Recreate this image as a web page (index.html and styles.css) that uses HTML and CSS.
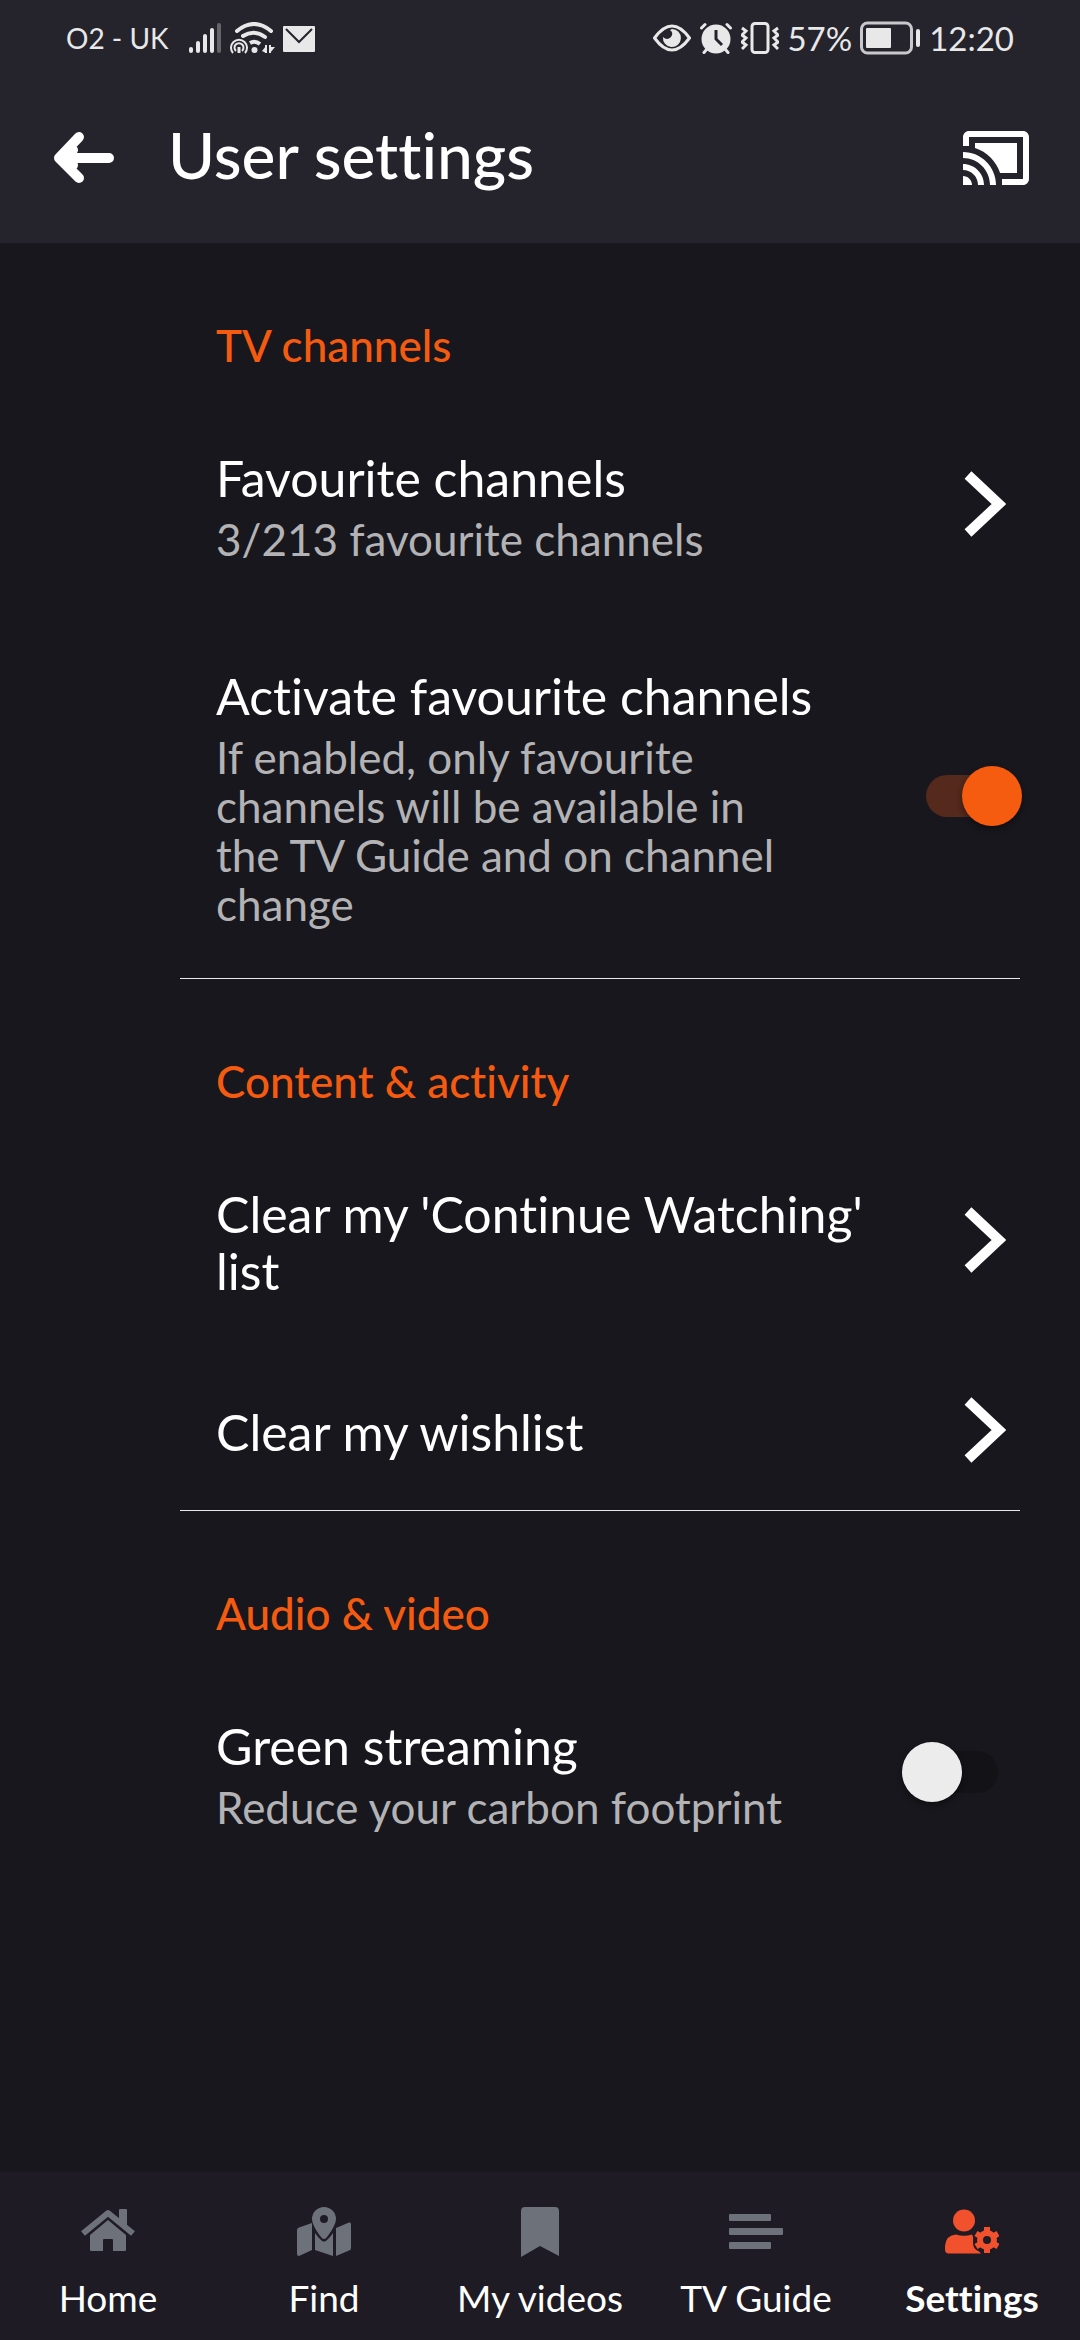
FILE: index.html
```html
<!DOCTYPE html>
<html lang="en">
<head>
<meta charset="UTF-8">
<meta name="viewport" content="width=device-width, initial-scale=1.0">
<title>User settings</title>
<link rel="stylesheet" href="styles.css">
</head>
<body>

<header class="header">
  <div class="status">
    <span class="carrier">O2 - UK</span>
    <div class="status-icons">
      <svg width="34" height="32" viewBox="0 0 34 32" fill="#e8e8e8">
        <rect x="0" y="25" width="4" height="6" rx="2"/>
        <rect x="7" y="19" width="4" height="12" rx="2"/>
        <rect x="14" y="12" width="4" height="19" rx="2"/>
        <rect x="21" y="6" width="4" height="25" rx="2"/>
        <rect x="28" y="1" width="4" height="30" rx="2" fill="#66656b"/>
      </svg>
      <svg width="46" height="32" viewBox="0 0 46 32" fill="none" stroke="#e8e8e8">
        <path d="M7 9Q24 -5 41 9" stroke-width="4" stroke-linecap="round"/>
        <path d="M13 14Q24 7 35 15" stroke-width="4" stroke-linecap="round"/>
        <path d="M20 21Q25 18 30 22" stroke-width="4"/>
        <circle cx="24.5" cy="28" r="3" fill="#e8e8e8" stroke="none"/>
        <path d="M3 31A8 8 0 1 1 15 31" stroke-width="2"/>
        <path d="M6 29A4.5 4.5 0 1 1 12 29" stroke-width="2"/>
        <path d="M9 25V31" stroke-width="3"/>
        <path d="M36 23V31M40 23V31" stroke-width="2"/>
        <path d="M32 29L36 24V31ZM45 25L40 31V25Z" fill="#e8e8e8" stroke="none"/>
      </svg>
      <svg width="32" height="32" viewBox="0 0 32 32">
        <rect y="4" width="32" height="26" rx="1" fill="#e8e8e8"/>
        <path d="M3 7L16 20L29 7" fill="none" stroke="#25242d" stroke-width="2"/>
      </svg>
    </div>
    <div class="status-icons status-right">
      <svg width="38" height="32" viewBox="0 0 38 32">
        <path d="M1.5 16Q19 -8 36.5 16Q19 40 1.5 16Z" fill="none" stroke="#e8e8e8" stroke-width="3"/>
        <path d="M19 7A9 9 0 1 1 10 15Q14 19 18 15Q21 11 17 8Z" fill="#e8e8e8"/>
      </svg>
      <svg width="34" height="32" viewBox="0 0 34 32">
        <g stroke="#e8e8e8" stroke-width="3" stroke-linecap="round">
          <path d="M2.5 6L6 2.5M31.5 6L28 2.5M8 27L5 30.5M26 27L29 30.5"/>
        </g>
        <circle cx="17" cy="17" r="14.5" fill="#e8e8e8"/>
        <path d="M17 8V17L23 23" fill="none" stroke="#25242d" stroke-width="3"/>
      </svg>
      <svg width="38" height="32" viewBox="0 0 38 32" fill="none" stroke="#e8e8e8" stroke-width="3">
        <rect x="11" y="1.5" width="16" height="29" rx="3"/>
        <path d="M1 6L5 9L1 13L5 16L1 20L5 23L1 27M37 6L33 9L37 13L33 16L37 20L33 23L37 27"/>
      </svg>
      <span class="status-text">57%</span>
      <svg width="61" height="34" viewBox="0 0 61 34">
        <rect x="1.5" y="2" width="50" height="30" rx="6" fill="none" stroke="#c9c9cc" stroke-width="3"/>
        <rect x="6" y="7" width="25" height="20" rx="1" fill="#e8e8e8"/>
        <rect x="56" y="8" width="4" height="18" rx="2" fill="#e8e8e8"/>
      </svg>
      <span class="status-text">12:20</span>
    </div>
  </div>
  <div class="title-bar">
    <button class="icon-button" aria-label="Back">
      <svg width="60" height="52" viewBox="0 0 60 52" fill="none" stroke="#fff" stroke-width="10" stroke-linecap="round" stroke-linejoin="round">
        <path d="M25 5L5 26L25 46M6 26H55M19 18L13 26L19 33"/>
      </svg>
    </button>
    <h1 class="title">User settings</h1>
    <button class="icon-button" aria-label="Cast">
      <svg width="66" height="54" viewBox="1 3 22 18" fill="#fff">
        <path d="M1 18v3h3c0-1.66-1.34-3-3-3zm0-4v2c2.76 0 5 2.24 5 5h2c0-3.87-3.13-7-7-7zm18-7H5v1.63c3.96 1.28 7.09 4.41 8.37 8.37H19V7zM1 10v2c4.97 0 9 4.03 9 9h2c0-6.08-4.93-11-11-11zm20-7H3c-1.1 0-2 .9-2 2v3h2V5h18v14h-7v2h7c1.1 0 2-.9 2-2V5c0-1.1-.9-2-2-2z"/>
      </svg>
    </button>
  </div>
</header>

<main class="settings">
  <section class="section">
    <h2 class="section-title">TV channels</h2>
    <a class="row" href="#favourites">
      <span class="row-text">
        <span class="row-title">Favourite channels</span>
        <span class="row-note">3/213 favourite channels</span>
      </span>
      <svg class="chevron" width="42" height="66" viewBox="0 0 42 66"><path d="M4 4L35 33L4 62" /></svg>
    </a>
    <label class="row">
      <span class="row-text">
        <span class="row-title">Activate favourite channels</span>
        <span class="row-note">If enabled, only favourite channels will be available in the TV Guide and on channel change</span>
      </span>
      <input class="switch" type="checkbox" role="switch" checked>
    </label>
  </section>

  <section class="section">
    <h2 class="section-title">Content &amp; activity</h2>
    <a class="row" href="#continue-watching">
      <span class="row-text">
        <span class="row-title">Clear my 'Continue Watching' list</span>
      </span>
      <svg class="chevron" width="42" height="66" viewBox="0 0 42 66"><path d="M4 4L35 33L4 62" /></svg>
    </a>
    <a class="row" href="#wishlist">
      <span class="row-text">
        <span class="row-title">Clear my wishlist</span>
      </span>
      <svg class="chevron" width="42" height="66" viewBox="0 0 42 66"><path d="M4 4L35 33L4 62" /></svg>
    </a>
  </section>

  <section class="section">
    <h2 class="section-title">Audio &amp; video</h2>
    <label class="row">
      <span class="row-text">
        <span class="row-title">Green streaming</span>
        <span class="row-note">Reduce your carbon footprint</span>
      </span>
      <input class="switch" type="checkbox" role="switch">
    </label>
  </section>
</main>

<nav class="tabs">
  <a class="tab" href="#home">
    <svg width="54" height="54" viewBox="0 -5 54 54" fill="currentColor">
      <path d="M2 24.5L27 4L52 24.5" fill="none" stroke="currentColor" stroke-width="6" stroke-linejoin="round"/>
      <path d="M38 1q0-1 1-1h6q1 0 1 1v16l-8-6z"/>
      <path d="M27 11L9 26V41q0 1 1 1H22V31q0-1 1-1h8q1 0 1 1V42H44q1 0 1-1V26Z"/>
    </svg>
    Home
  </a>
  <a class="tab" href="#find">
    <svg width="54" height="54" viewBox="0 -3 54 54" fill="currentColor">
      <path d="M2 20.5L15 16V43L2 49Q0 49 0 47V23Q0 21 2 20.5Z"/>
      <path d="M18 26C20 29 22 31 24 33Q27 36 30 33C32 31 34 29 36 26V49L18 43Z"/>
      <path d="M39 21L52 15.5Q54 15 54 17V41Q54 43 52 43.5L39 49Z"/>
      <path d="M27 32Q25 32 24 30C20 25 15 17 15 12A12 12 0 1 1 39 12C39 17 34 25 30 30Q29 32 27 32ZM27 8A4 4 0 1 0 27 16A4 4 0 1 0 27 8Z"/>
    </svg>
    Find
  </a>
  <a class="tab" href="#videos">
    <svg width="54" height="54" viewBox="-8 -3 54 54" fill="currentColor">
      <path d="M4 0H34Q38 0 38 4V49L19 39L0 50V4Q0 0 4 0Z"/>
    </svg>
    My videos
  </a>
  <a class="tab" href="#guide">
    <svg width="54" height="54" viewBox="0 0 54 54" fill="currentColor">
      <rect y="10" width="42" height="7" rx="1"/>
      <rect y="24" width="54" height="7" rx="1"/>
      <rect y="38" width="42" height="7" rx="1"/>
    </svg>
    TV Guide
  </a>
  <a class="tab active" href="#settings">
    <svg width="54" height="54" viewBox="0 -5 54 54" fill="#f1512d">
      <circle cx="19" cy="11.5" r="11"/>
      <path d="M11 25.5Q19 28 27 25.5L29 30L28 35Q29 41 34 42L36 44.5H4Q0 44.5 0 40.5V37Q1 26 11 25.5Z"/>
      <circle cx="42" cy="31" r="12.5" fill="none" stroke="#1e1b24" stroke-width="3"/>
      <circle cx="42" cy="31" r="10"/>
      <path d="M42 18V44M31 24.5L53 37.5M31 37.5L53 24.5" stroke="#f1512d" stroke-width="6"/>
      <circle cx="42" cy="31" r="4" fill="#1e1b24"/>
    </svg>
    Settings
  </a>
</nav>

</body>
</html>
```
FILE: styles.css
```css
* {
  box-sizing: border-box;
}
body {
  margin: 0;
  min-height: 100vh;
  display: flex;
  flex-direction: column;
  background: #18171d;
  color: #fff;
  font-family: Lato, "Open Sans", sans-serif;
  font-variant-ligatures: none;
}
a {
  color: inherit;
  text-decoration: none;
}
svg {
  display: block;
  flex: none;
}

/* status bar and title */
.header {
  background: #25242d;
  padding-bottom: 49px;
}
.status {
  display: flex;
  align-items: center;
  height: 76px;
  padding: 0 66px;
  gap: 20px;
  color: #e8e8e8;
}
.carrier {
  font-size: 28px;
}
.status-icons {
  display: flex;
  align-items: center;
  gap: 7px;
}
.status-right {
  gap: 8px;
  margin-left: auto;
}
.status-text {
  font-size: 33px;
}
.title-bar {
  display: flex;
  align-items: center;
  padding: 46px 51px 0 54px;
  height: 118px;
}
.icon-button {
  padding: 0;
  border: none;
  background: none;
  cursor: pointer;
}
.title {
  flex: 1;
  margin: 0 0 6px 54px;
  font-size: 64px;
  line-height: 66px;
  font-weight: 500;
}

/* settings list */
.settings {
  flex: 1;
}
.section {
  margin: 0 60px 0 180px;
  padding-left: 36px;
}
.section + .section {
  border-top: 1px solid #e8e8ec;
}
.section-title {
  margin: 0;
  padding: 76px 0 24px;
  color: #f55b10;
  font-size: 44px;
  line-height: 52px;
  font-weight: 500;
}
.row {
  display: flex;
  align-items: center;
  gap: 60px;
  padding: 52px 0;
  cursor: pointer;
}
.row-text {
  flex: 1;
  display: flex;
  flex-direction: column;
  gap: 8px;
  margin: 3px 0 -3px;
}
.row-title {
  font-size: 50px;
  line-height: 57px;
}
.row-note {
  color: #b3b3b5;
  font-size: 44px;
  line-height: 49px;
  max-width: 572px;
}
.chevron {
  margin: -6px 14px -6px 0;
  fill: none;
  stroke: #fff;
  stroke-width: 10px;
}

/* track and thumb share one grid cell */
.switch {
  appearance: none;
  display: grid;
  align-items: center;
  flex: none;
  width: 120px;
  height: 60px;
  margin: 0 -2px 0 -60px;
  cursor: pointer;
}
.switch::before,
.switch::after {
  content: "";
  grid-area: 1 / 1;
}
.switch::before {
  justify-self: center;
  width: 72px;
  height: 42px;
  border-radius: 21px;
  background: #131217;
}
.switch::after {
  width: 60px;
  height: 60px;
  border-radius: 50%;
  background: #ececec;
  box-shadow: 0 3px 6px rgba(0, 0, 0, 0.4);
}
.switch:checked::before {
  background: #55291c;
}
.switch:checked::after {
  justify-self: end;
  background: #f65c10;
}

/* bottom tabs */
.tabs {
  display: grid;
  grid-template-columns: repeat(5, 1fr);
  height: 168px;
  padding-top: 32px;
  background: #1e1b24;
}
.tab {
  display: flex;
  flex-direction: column;
  align-items: center;
  gap: 18px;
  font-size: 37px;
  line-height: 44px;
  white-space: nowrap;
}
.tab svg {
  color: #6d7179;
}
.active {
  font-weight: bold;
}
```
